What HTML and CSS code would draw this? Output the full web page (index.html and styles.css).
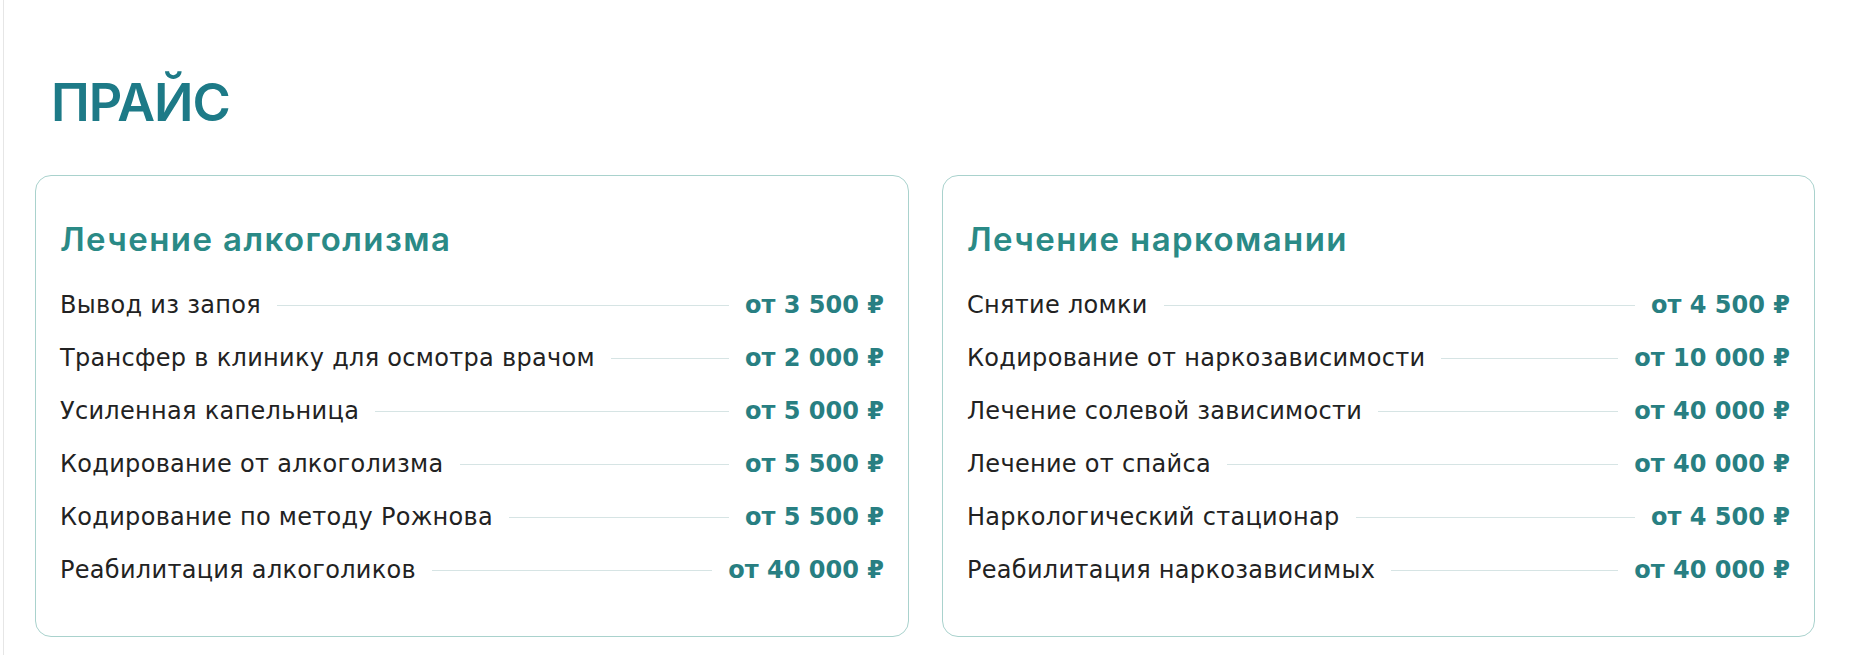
FILE: index.html
```html
<!DOCTYPE html>
<html lang="ru">
<head>
<meta charset="utf-8">
<title>Прайс</title>
<link rel="stylesheet" href="styles.css">
</head>
<body>
<main class="page">
  <section class="price">
    <h1 class="price__title">ПРАЙС</h1>
    <div class="price__grid">
      <div class="card">
        <h2 class="card__title">Лечение алкоголизма</h2>
        <ul class="card__list">
          <li class="row"><span class="row__name">Вывод из запоя</span><span class="row__line"></span><span class="row__price">от 3 500 ₽</span></li>
          <li class="row"><span class="row__name">Трансфер в клинику для осмотра врачом</span><span class="row__line"></span><span class="row__price">от 2 000 ₽</span></li>
          <li class="row"><span class="row__name">Усиленная капельница</span><span class="row__line"></span><span class="row__price">от 5 000 ₽</span></li>
          <li class="row"><span class="row__name">Кодирование от алкоголизма</span><span class="row__line"></span><span class="row__price">от 5 500 ₽</span></li>
          <li class="row"><span class="row__name">Кодирование по методу Рожнова</span><span class="row__line"></span><span class="row__price">от 5 500 ₽</span></li>
          <li class="row"><span class="row__name">Реабилитация алкоголиков</span><span class="row__line"></span><span class="row__price">от 40 000 ₽</span></li>
        </ul>
      </div>
      <div class="card">
        <h2 class="card__title">Лечение наркомании</h2>
        <ul class="card__list">
          <li class="row"><span class="row__name">Снятие ломки</span><span class="row__line"></span><span class="row__price">от 4 500 ₽</span></li>
          <li class="row"><span class="row__name">Кодирование от наркозависимости</span><span class="row__line"></span><span class="row__price">от 10 000 ₽</span></li>
          <li class="row"><span class="row__name">Лечение солевой зависимости</span><span class="row__line"></span><span class="row__price">от 40 000 ₽</span></li>
          <li class="row"><span class="row__name">Лечение от спайса</span><span class="row__line"></span><span class="row__price">от 40 000 ₽</span></li>
          <li class="row"><span class="row__name">Наркологический стационар</span><span class="row__line"></span><span class="row__price">от 4 500 ₽</span></li>
          <li class="row"><span class="row__name">Реабилитация наркозависимых</span><span class="row__line"></span><span class="row__price">от 40 000 ₽</span></li>
        </ul>
      </div>
    </div>
  </section>
</main>
</body>
</html>
```
FILE: styles.css
```css
* { box-sizing: border-box; }
html, body { margin: 0; padding: 0; background: #fff; }
body {
  font-family: "DejaVu Sans", "Open Sans", sans-serif;
  color: #222;
  height: 655px;
  overflow: hidden;
}
.page {
  margin-left: 3px;
  border-left: 1px solid #e6e6e6;
  height: 655px;
  padding: 0 31px 0 31px;
}
.price__title {
  margin: 0;
  padding-top: 73px;
  padding-left: 16px;
  font-family: Inter, "DejaVu Sans", sans-serif;
  font-size: 52px;
  line-height: 60px;
  font-weight: 600;
  color: #1d7a87;
  letter-spacing: -1px;
}
.price__grid {
  margin-top: 42px;
  display: grid;
  grid-template-columns: 874px 873px;
  column-gap: 33px;
}
.card {
  border: 1px solid #a9d2cd;
  border-radius: 16px;
  height: 462px;
  padding: 43px 24px 0 24px;
}
.card__title {
  margin: 0;
  font-family: Inter, "DejaVu Sans", sans-serif;
  font-size: 33px;
  line-height: 40px;
  font-weight: 600;
  color: #2a8a86;
  letter-spacing: 1.4px;
}
.card__list {
  list-style: none;
  margin: 19px 0 0 0;
  padding: 0;
}
.row {
  display: flex;
  align-items: center;
  height: 53px;
  font-size: 24px;
  letter-spacing: 0.3px;
}
.row__name { white-space: nowrap; }
.row__line {
  flex: 1;
  height: 1px;
  background: #d6e4e4;
  margin: 2px 16px 0 16px;
}
.row__price {
  font-weight: 700;
  color: #287f82;
  letter-spacing: 0;
  white-space: nowrap;
}
```
